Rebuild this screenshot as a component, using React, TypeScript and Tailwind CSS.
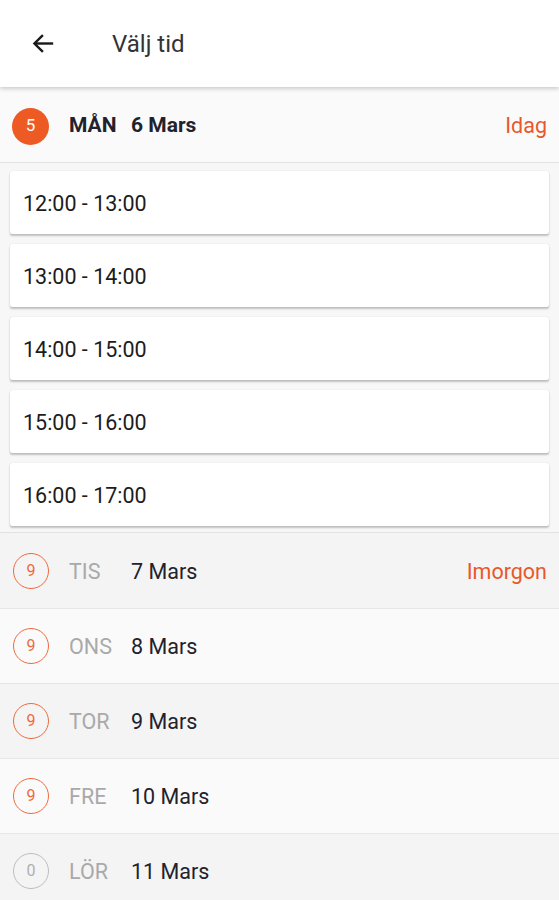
import React from "react";

const slots = ["12:00 - 13:00", "13:00 - 14:00", "14:00 - 15:00", "15:00 - 16:00", "16:00 - 17:00"];

const days = [
  { n: "9", d: "TIS", date: "7 Mars", tag: "Imorgon", bg: "bg-[#f4f4f4]", active: true },
  { n: "9", d: "ONS", date: "8 Mars", tag: "", bg: "bg-[#fafafa]", active: true },
  { n: "9", d: "TOR", date: "9 Mars", tag: "", bg: "bg-[#f4f4f4]", active: true },
  { n: "9", d: "FRE", date: "10 Mars", tag: "", bg: "bg-[#fafafa]", active: true },
  { n: "0", d: "LÖR", date: "11 Mars", tag: "", bg: "bg-[#f4f4f4]", active: false },
];

export default function App() {
  return (
    <div className="w-[559px] h-[900px] overflow-hidden bg-[#f4f4f4] font-['Roboto',_'Liberation_Sans',_sans-serif]">
      <div className="relative z-10 h-[87px] bg-white flex items-center shadow-[0_2px_4px_rgba(0,0,0,0.18)]">
        <svg className="ml-[29px]" width="29" height="29" viewBox="0 0 24 24" fill="none" stroke="#1a1a1a" strokeWidth="2">
          <path d="M20 12H5" />
          <path d="M11.5 5l-7 7 7 7" />
        </svg>
        <span className="ml-[54px] text-[24px] text-[#333]">Välj tid</span>
      </div>
      <div className="h-[76px] bg-[#fafafa] flex items-center border-b border-[#e2e2e2] pt-[3px]">
        <div className="ml-[12px] w-[37px] h-[37px] rounded-full bg-[#ee5a24] flex items-center justify-center text-white text-[17px]">5</div>
        <span className="ml-[20px] w-[62px] text-[21px] font-bold text-[#22222c]">MÅN</span>
        <span className="text-[21px] font-bold text-[#22222c]">6 Mars</span>
        <span className="ml-auto mr-[12px] text-[21.5px] text-[#e8582a]">Idag</span>
      </div>
      <div className="bg-[#f7f7f7] px-[10px] pt-[8px] pb-[6px] flex flex-col gap-[10px] border-b border-[#e2e2e2]">
        {slots.map((s) => (
          <div key={s} className="h-[63px] bg-white rounded-[2px] flex items-center pl-[13px] pt-[3px] text-[21.5px] text-[#1c1c1c] shadow-[0_2px_2px_rgba(0,0,0,0.22),0_0_1px_rgba(0,0,0,0.2)]">
            {s}
          </div>
        ))}
      </div>
      <div className="h-[1px]" />
      {days.map((r) => (
        <div key={r.d} className={`h-[75px] ${r.bg} flex items-center border-b border-[#e6e6e6]`}>
          <div
            className={`ml-[13px] w-[36px] h-[36px] rounded-full border-[1.5px] flex items-center justify-center text-[16px] ${
              r.active ? "border-[#ee6a3c] text-[#ee6a3c]" : "border-[#bdbdbd] text-[#b0b0b0]"
            }`}
          >
            {r.n}
          </div>
          <span className="ml-[20px] w-[62px] pt-[3px] text-[21.5px] text-[#a9a9a9]">{r.d}</span>
          <span className="pt-[3px] text-[21.5px] text-[#22222c]">{r.date}</span>
          {r.tag && <span className="ml-auto mr-[12px] pt-[3px] text-[21.5px] text-[#e8582a]">{r.tag}</span>}
        </div>
      ))}
    </div>
  );
}
